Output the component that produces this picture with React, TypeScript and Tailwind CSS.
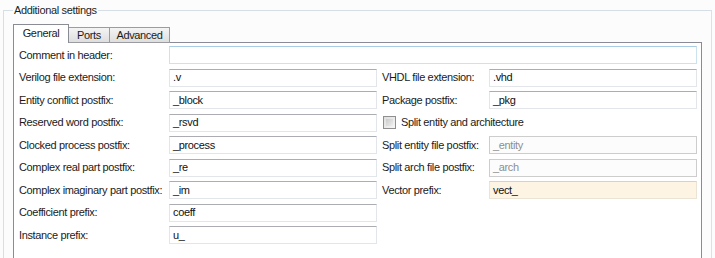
import React from "react";

type Field = {
  label: string;
  value: string;
  kind?: "normal" | "disabled" | "cream";
};

const leftRows: Field[] = [
  { label: "Verilog file extension:", value: ".v" },
  { label: "Entity conflict postfix:", value: "_block" },
  { label: "Reserved word postfix:", value: "_rsvd" },
  { label: "Clocked process postfix:", value: "_process" },
  { label: "Complex real part postfix:", value: "_re" },
  { label: "Complex imaginary part postfix:", value: "_im" },
  { label: "Coefficient prefix:", value: "coeff" },
  { label: "Instance prefix:", value: "u_" },
];

const rightRows: (Field | "checkbox" | null)[] = [
  { label: "VHDL file extension:", value: ".vhd" },
  { label: "Package postfix:", value: "_pkg" },
  "checkbox",
  { label: "Split entity file postfix:", value: "_entity", kind: "disabled" },
  { label: "Split arch file postfix:", value: "_arch", kind: "disabled" },
  { label: "Vector prefix:", value: "vect_", kind: "cream" },
  null,
  null,
];

function TextBox({ value, kind = "normal" }: { value: string; kind?: Field["kind"] }) {
  const styles =
    kind === "disabled"
      ? "bg-[#fcfcfc] border-[#cdcdcd] text-[#8e8e8e]"
      : kind === "cream"
      ? "bg-[#fdf4e3] border-[#eae3d6] border-t-[#d8d2c6] text-[#111]"
      : "bg-white border-[#e2e6ea] border-t-[#abadb3] text-[#111]";
  return (
    <div className={`h-[18px] border flex items-center pl-[3px] leading-none ${styles}`}>
      {value}
    </div>
  );
}

export default function App() {
  return (
    <div
      className="w-[715px] h-[258px] bg-[#fcfcfc] overflow-hidden text-[11px] tracking-[-0.35px] text-[#1b1b1b]"
      style={{ fontFamily: '"Liberation Sans", Arial, sans-serif' }}
    >
      <fieldset className="mt-[2px] ml-[3px] mr-[3px] border border-[#d5dfe5] border-r-[#cfe6ee] h-[270px] pl-[9px] pr-[9px]">
        <legend className="px-[1px] leading-[16px] text-[#1e1e1e]">Additional settings</legend>

        {/* tabs */}
        <div className="flex items-end h-[19px] mt-[6px]">
          <div className="h-[19px] w-[56px] border border-[#898c95] border-b-0 bg-white flex items-center justify-center pb-[1px] relative z-10">
            General
          </div>
          <div className="h-[16px] w-[41px] border border-l-0 border-[#9a9ca2] bg-gradient-to-b from-[#f4f4f4] to-[#dedede] flex items-center justify-center">
            Ports
          </div>
          <div className="h-[16px] w-[60px] border border-l-0 border-[#9a9ca2] bg-gradient-to-b from-[#f4f4f4] to-[#dedede] flex items-center justify-center">
            Advanced
          </div>
        </div>

        {/* panel */}
        <div className="-mt-[1px] w-[689px] h-[230px] border border-[#898c95] bg-white pt-[3px] pl-[5px] pr-[3px]">
          <div className="grid grid-cols-[150px_208px_5px_107px_208px] gap-y-[4.5px] items-center">
            <div className="h-[18px] flex items-center">Comment in header:</div>
            <div className="col-span-4 h-[18px] border border-[#cde2ef] border-t-[#a9cbe6] bg-white" />

            {leftRows.map((row, i) => {
              const r = rightRows[i];
              return (
                <React.Fragment key={row.label}>
                  <div className="h-[18px] flex items-center whitespace-nowrap">{row.label}</div>
                  <TextBox value={row.value} kind={row.kind} />
                  <div />
                  {r === null ? (
                    <>
                      <div />
                      <div />
                    </>
                  ) : r === "checkbox" ? (
                    <div className="col-span-2 h-[18px] flex items-center gap-[5px] ml-[1px]">
                      <span className="w-[13px] h-[13px] border border-[#8f8f8f] bg-gradient-to-br from-[#dedede] to-[#f6f6f6] p-[2px]">
                        <span className="block w-full h-full bg-gradient-to-br from-[#cbcbcb] to-[#eeeeee]" />
                      </span>
                      <span>Split entity and architecture</span>
                    </div>
                  ) : (
                    <>
                      <div className="h-[18px] flex items-center whitespace-nowrap">{r.label}</div>
                      <TextBox value={r.value} kind={r.kind} />
                    </>
                  )}
                </React.Fragment>
              );
            })}
          </div>
        </div>
      </fieldset>
    </div>
  );
}
